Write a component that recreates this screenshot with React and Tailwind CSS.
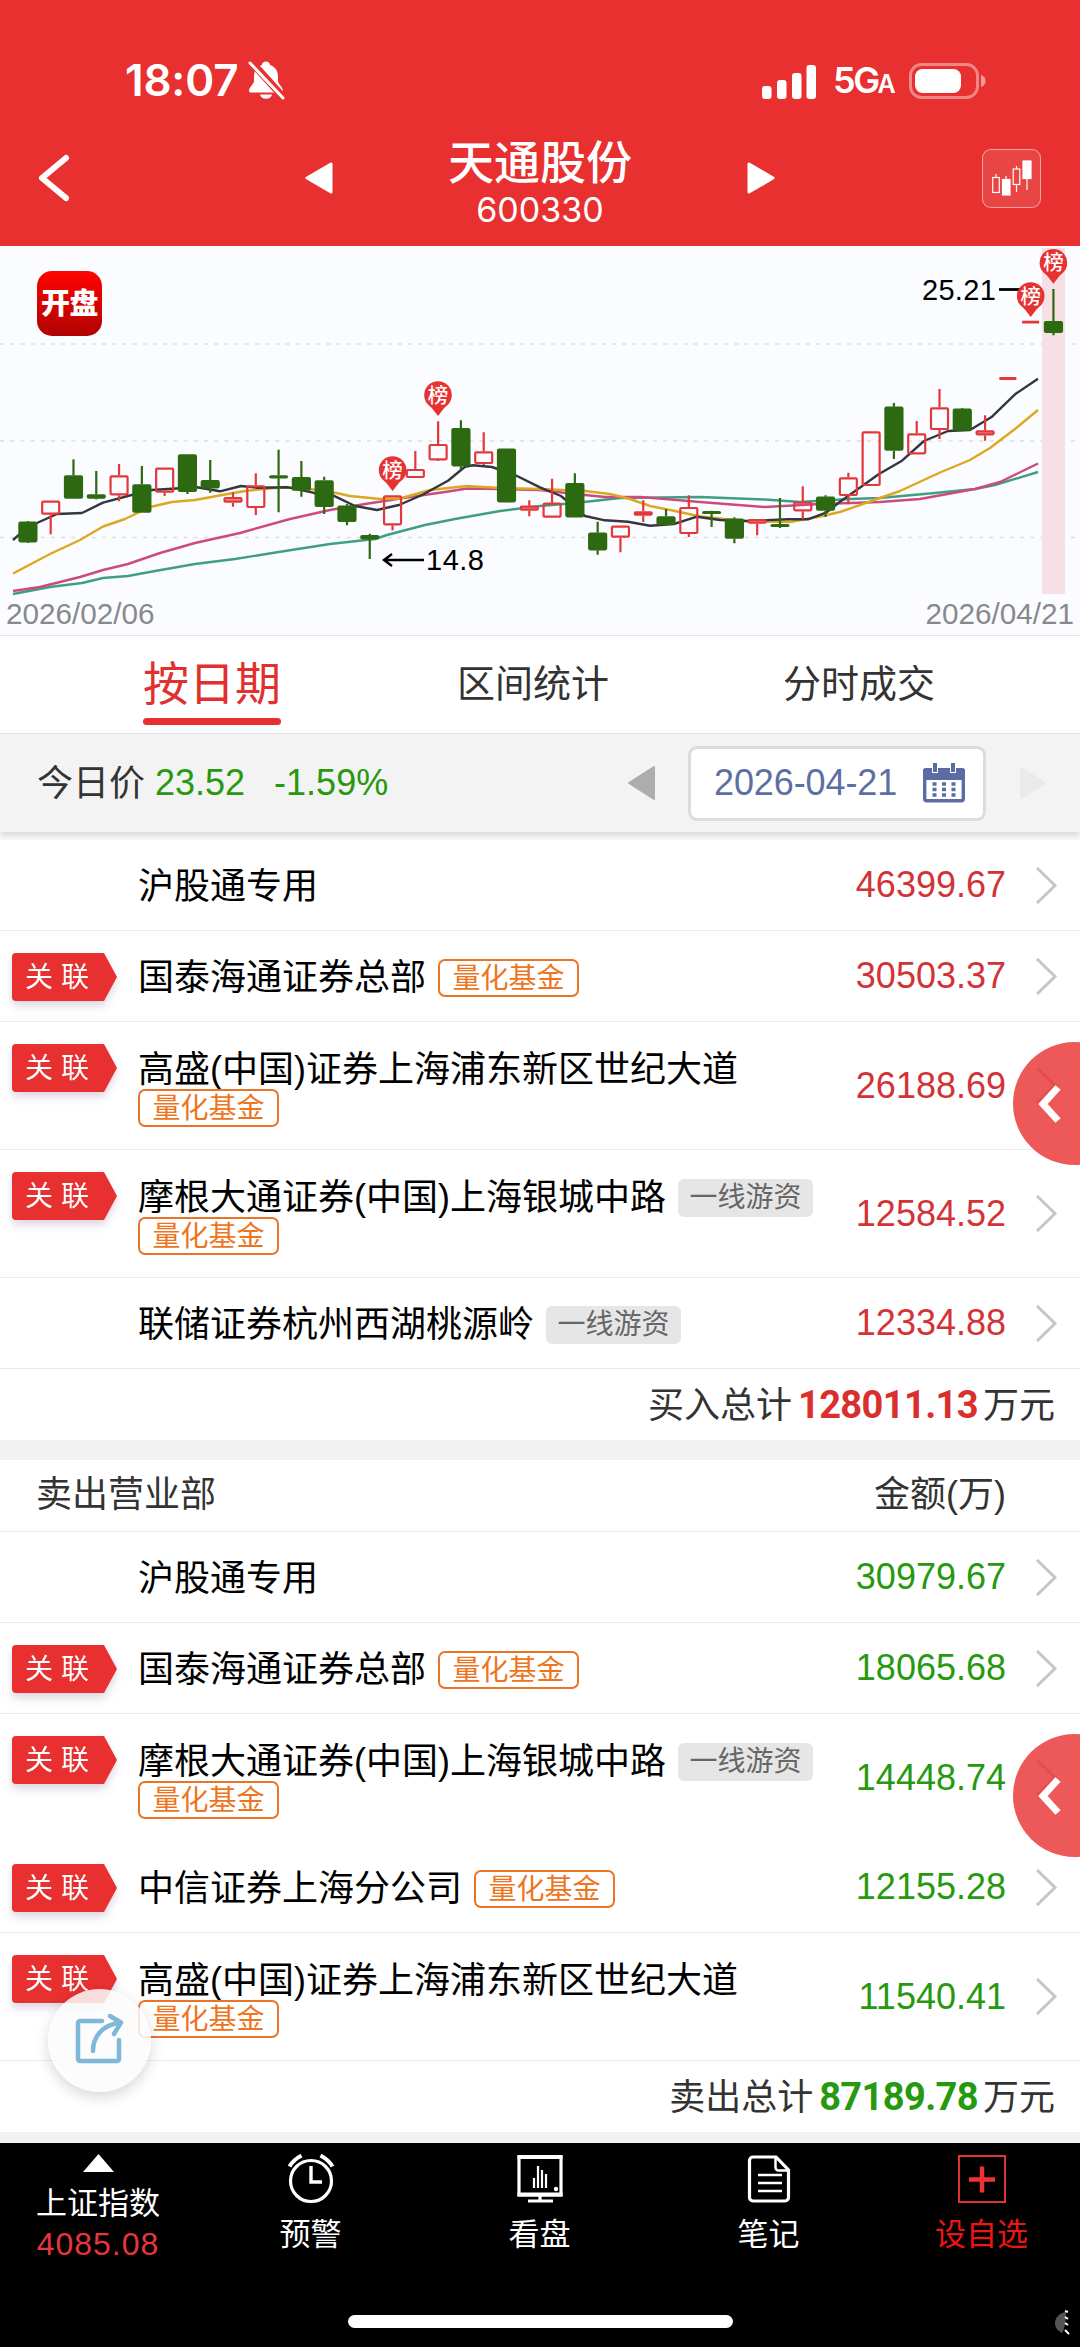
import React from 'react';
import clsx from 'clsx';

// [isUp, high, bodyTop, bodyBottom, low]
const CANDLES = [
  [0, 275, 275.7, 296.3, 297], [1, 254.7, 254.7, 268.7, 288.3], [0, 213.3, 229.3, 252.7, 252.7],
  [0, 225, 248.3, 252.7, 253.5], [1, 218, 229.3, 249.3, 255.3], [0, 220, 238.3, 266.7, 266.7],
  [1, 221.7, 221.7, 246.7, 250], [0, 208.3, 208.3, 246, 248], [0, 214, 234, 242.3, 246.7],
  [1, 246.3, 251, 256.7, 260.7], [1, 227.3, 239.3, 262, 269], [0, 203.7, 229.3, 232.3, 266.3],
  [0, 215, 231, 244.7, 250.7], [0, 230.7, 234.3, 261, 268], [0, 258, 259.7, 276, 279.3],
  [0, 287.7, 289, 293.3, 313], [1, 249.3, 249.3, 279.3, 284.3], [1, 205, 223, 232, 232],
  [1, 175.3, 198, 214.3, 215], [0, 174.3, 182, 220.3, 224], [1, 186.3, 205.3, 218, 219],
  [0, 202.7, 202.7, 256.3, 256.3], [1, 254.3, 259.7, 264.7, 270.3], [1, 232.7, 256.7, 271.7, 272],
  [0, 227.3, 237, 271.3, 271.3], [0, 275.7, 286.7, 304.3, 308.7], [1, 279.7, 279.7, 291.7, 306.3],
  [1, 254.3, 265.3, 269.7, 276], [0, 263, 270.3, 279, 279.5], [1, 249.3, 261, 288, 291],
  [0, 264.7, 265, 268, 281], [0, 271.3, 272.7, 292.7, 297.3], [1, 273, 273, 277.7, 289.3],
  [0, 252, 278, 280.7, 282], [1, 240.3, 255.7, 265.3, 273.3], [0, 249.3, 250.7, 264.7, 271],
  [1, 226.7, 231.3, 250, 258.3], [1, 185.3, 185.3, 240, 240], [0, 157, 160.7, 204.7, 213],
  [1, 175, 187.3, 208.3, 208.3], [1, 143, 161.3, 184, 193], [0, 162, 162.7, 184.7, 185],
  [1, 169.3, 184.3, 189.3, 194.7], [1, 131, 131, 134, 134], [1, 74.7, 74.7, 77.5, 77.5],
  [0, 43, 75, 87, 89.3],
];

const AVERAGES = [
  { color: '#3f9f84', points: '13,348 50,341 82,337 103,332 128,330 155,325 195,318 235,313 285,305 330,298 375,293 387,289 425,279 455,273 500,265 540,260 575,257 620,252 700,251 765,253.5 800,256 850,253 880,252 935,247 975,243 995,239 1038,226' },
  { color: '#cc4a80', points: '13,345 40,341 60,336 80,331 103,324 128,318 160,307 195,297 240,287 290,273 330,264 365,258 410,251 445,246 467,242.5 500,243 540,244 575,248 605,251 640,251 665,253 700,256 765,261 820,258 880,256 920,253 975,243 1000,236 1038,217.5' },
  { color: '#dba81f', points: '13,327.5 50,308 80,294 103,280.5 125,273 150,261 172,256 195,254 222,249 245,245 285,241 325,244.5 350,250 380,253 400,252.5 430,244 467,240 500,242 540,243 585,245 610,248 630,253 650,260 675,265 700,270.5 750,275.5 790,276 820,270.5 840,266 870,255.5 900,245 940,226.5 970,214 990,202 1015,183 1038,164' },
  { color: '#33363c', points: '13,294 28,281 57,268 82,267 103,256.7 141,246.5 152,244 176,242.5 197,241.3 220,245.3 241,240 257,241.7 288,241.3 313,246.7 333,249.3 355,260 377,264 399,259 422,249 448,234.7 465,220.7 473,219.3 492,221 515,229 540,241.3 561,250 585,270 605,274.3 628,275.7 650,279.7 674,278 697,270.7 720,274 747,275 788,273.3 808,273.3 826,266.7 840,255.7 859,242.3 879,228 902,214.7 924,195 948,185 970,184 992,170.7 1015,148.3 1038,132.7' },
];

const PINS = [[392.6, 224], [438, 149], [1030.7, 50], [1053.4, 16.7]];

const BUY = [
  { name: '沪股通专用', amount: '46399.67' },
  { name: '国泰海通证券总部', amount: '30503.37', linked: true, quant: true },
  { name: '高盛(中国)证券上海浦东新区世纪大道', amount: '26188.69', linked: true, quant: true, wrap: true, drawer: true },
  { name: '摩根大通证券(中国)上海银城中路', amount: '12584.52', linked: true, quant: true, hot: true, wrap: true },
  { name: '联储证券杭州西湖桃源岭', amount: '12334.88', hot: true },
];

const SELL = [
  { name: '沪股通专用', amount: '30979.67' },
  { name: '国泰海通证券总部', amount: '18065.68', linked: true, quant: true },
  { name: '摩根大通证券(中国)上海银城中路', amount: '14448.74', linked: true, quant: true, hot: true, wrap: true, drawer: true, noBorder: true },
  { name: '中信证券上海分公司', amount: '12155.28', linked: true, quant: true },
  { name: '高盛(中国)证券上海浦东新区世纪大道', amount: '11540.41', linked: true, quant: true, wrap: true },
];

function StatusBar() {
  return (
    <div className="flex h-[110px] items-start justify-between pl-[125px] pr-[94px] pt-[58px] font-['Inter','Noto_Sans_CJK_SC',sans-serif]">
      <div className="flex items-center">
        <span className="text-[44px] font-semibold leading-[44px] tracking-[-0.2px]">18:07</span>
        <svg className="ml-[9px]" width="38" height="40" viewBox="0 0 38 40">
          <path fill="#fff" d="M19 1.500c-2.200 0-3.900 1.500-4.100 3.400C9.800 6.500 7 11 7 16v5c0 3-5 6.500-5 9.800 0 1.200.8 1.800 2 1.800h30c1.200 0 2-.6 2-1.800 0-3.300-5-6.800-5-9.800v-5c0-5-2.800-9.500-7.900-11.100C22.900 3 21.200 1.500 19 1.500zM13 34.500c.5 2.700 3 4.300 6 4.300s5.500-1.600 6-4.300z" />
          <path d="M4 1.500L37 38" stroke="#e83030" strokeWidth="7.500" />
          <path d="M3 3L36 38" stroke="#fff" strokeWidth="3" strokeLinecap="round" />
        </svg>
      </div>
      <div className="flex items-center">
        <svg width="54" height="36" viewBox="0 0 54 36" fill="#fff">
          <rect x="0" y="22" width="9.500" height="13" rx="3" />
          <rect x="15" y="16" width="9.500" height="19" rx="3" />
          <rect x="30" y="9" width="9.500" height="26" rx="3" />
          <rect x="44.500" y="1" width="9.500" height="34" rx="3" />
        </svg>
        <span className="ml-[17px] flex w-[60px] items-baseline font-semibold leading-[44px]">
          <span className="text-[36px] tracking-[-2.5px]">5G</span>
          <span className="text-[25px]">A</span>
        </span>
        <svg className="ml-[16px]" width="77" height="38" viewBox="0 0 77 38">
          <rect x="1.500" y="1.500" width="67" height="33" rx="11" fill="none" stroke="#fff" strokeOpacity=".42" strokeWidth="3" />
          <rect x="6" y="6" width="46" height="24" rx="7.500" fill="#fff" />
          <path d="M72 12c3 .8 4.500 3 4.500 6s-1.500 5.200-4.500 6z" fill="#fff" fillOpacity=".5" />
        </svg>
      </div>
    </div>
  );
}

function TitleBar() {
  return (
    <div className="flex h-[136px] items-center pl-[36px] pr-[39px]">
      <svg width="36" height="50" viewBox="0 0 36 50" fill="none" stroke="#fff" strokeWidth="6" strokeLinecap="round" strokeLinejoin="round">
        <path d="M30 5L6 25l24 20" />
      </svg>
      <svg className="ml-[233px]" width="28" height="32" viewBox="0 0 28 32" fill="#fff" stroke="#fff" strokeWidth="3" strokeLinejoin="round">
        <path d="M2 16L26 2v28z" />
      </svg>
      <div className="flex flex-1 flex-col items-center pt-[13px]">
        <div className="text-[46px] font-medium leading-[50px]">天通股份</div>
        <div className="font-['Inter',sans-serif] text-[34px] leading-[43px]">600330</div>
      </div>
      <svg className="mr-[207px]" width="28" height="32" viewBox="0 0 28 32" fill="#fff" stroke="#fff" strokeWidth="3" strokeLinejoin="round">
        <path d="M26 16L2 2v28z" />
      </svg>
      <div className="flex h-[59px] w-[59px] items-center justify-center rounded-[9px] border border-white/50 bg-white/10">
        <svg width="41" height="36" viewBox="0 0 41 36" fill="none" stroke="#fff" strokeWidth="1.200">
          <path d="M5 14v3M15 16v3M25.500 6v3M25.500 24v8M36 18v12" />
          <rect x="1.700" y="17.500" width="6.600" height="15" />
          <rect x="11.500" y="19.500" width="7.500" height="15.500" fill="#fff" />
          <rect x="22.200" y="9" width="6.600" height="15.500" />
          <rect x="32" y="1" width="8" height="17.500" fill="#fff" />
        </svg>
      </div>
    </div>
  );
}

function KLineChart() {
  return (
    <section className="relative h-[390px] border-b border-[#e3e6ea] bg-[#fbfcff]">
      <svg width="1080" height="389" viewBox="0 0 1080 389" className="block font-['Liberation_Sans','Noto_Sans_CJK_SC',sans-serif]">
        {[98, 195, 291.5].map((y) => (
          <path key={y} d={`M0 ${y}H1080`} stroke="#dddee2" strokeWidth="1.500" strokeDasharray="4 6.200" />
        ))}
        <rect x="1042" y="2" width="23" height="346" fill="#f6dfe5" />
        {AVERAGES.map((l) => (
          <polyline key={l.color} points={l.points} fill="none" stroke={l.color} strokeWidth="2.400" strokeLinejoin="round" />
        ))}
        {CANDLES.map(([up, high, top, bottom, low], i) => {
          const x = 27.9 + i * 22.79;
          const color = up ? '#e2383b' : '#2c6910';
          // limit-up days have no range, draw them as a flat bar
          if (up && high === top && low === bottom && bottom - top < 4) {
            return <rect key={i} x={x - 8.5} y={top} width="17" height={bottom - top} fill={color} />;
          }
          return (
            <g key={i} stroke={color} strokeWidth="2.200">
              <path d={`M${x} ${high}V${top}M${x} ${bottom}V${low}`} />
              {up ? (
                <rect x={x - 8.5} y={top + 1} width="17" height={bottom - top - 2} rx="1" fill={bottom - top < 7 ? '#ee8a8c' : 'none'} />
              ) : (
                <rect x={x - 8.5} y={top + 1} width="17" height={Math.max(bottom - top - 2, 1)} rx="1" fill={color} />
              )}
            </g>
          );
        })}
        <path d="M999 43.500h22" stroke="#000" strokeWidth="2.800" />
        {PINS.map(([x, y]) => (
          <g key={x}>
            <path d={`M${x - 12.5} ${y + 6}Q${x - 5} ${y + 14} ${x} ${y + 21}Q${x + 5} ${y + 14} ${x + 12.5} ${y + 6}z`} fill="#e63232" />
            <circle cx={x} cy={y} r="13.800" fill="#e63232" />
            <text x={x} y={y + 7.5} fontSize="20.500" fontWeight="500" fill="#fff" textAnchor="middle">榜</text>
          </g>
        ))}
        <path d="M424 314H385M392 308l-8 6 8 6" fill="none" stroke="#000" strokeWidth="2.400" />
        <text x="426" y="324" fontSize="29" letterSpacing=".5">14.8</text>
        <text x="922" y="53.500" fontSize="29" letterSpacing=".3">25.21</text>
        <text x="6" y="377.500" fontSize="29.700" fill="#88898c">2026/02/06</text>
        <text x="1074" y="377.500" fontSize="29.700" fill="#88898c" textAnchor="end">2026/04/21</text>
      </svg>
      <div className="absolute left-[37px] top-[25px] flex h-[65px] w-[65px] items-center justify-center rounded-[15px] bg-gradient-to-b from-[#ff0400] to-[#b00303] pt-[2px] text-[29px] font-black tracking-[-0.5px] text-white">
        开盘
      </div>
    </section>
  );
}

function Tabs() {
  return (
    <nav className="flex h-[98px] border-b border-[#e4e6e6] text-[38px] text-[#333]">
      <div className="ml-[143px] flex w-[138px] flex-col items-center">
        <span className="whitespace-nowrap pt-[18px] text-[46px] leading-[60px] text-[#e0302f]">按日期</span>
        <span className="mt-[4px] h-[7px] w-full rounded-full bg-[#e83030]" />
      </div>
      <span className="ml-[176px] w-[152px] pt-[19px] leading-[58px]">区间统计</span>
      <span className="ml-[174px] w-[152px] pt-[19px] leading-[58px]">分时成交</span>
    </nav>
  );
}

function CalendarIcon() {
  return (
    <svg width="42" height="40" viewBox="0 0 42 40">
      <rect x="1.700" y="6.700" width="38.600" height="31" rx="2" fill="#fff" stroke="#5a6ca4" strokeWidth="3.400" />
      <path d="M0 8a3 3 0 013-3h36a3 3 0 013 3v9H0z" fill="#5a6ca4" />
      <path d="M12 1v9M30 1v9" stroke="#fff" strokeWidth="6" />
      <path d="M12 0v9M30 0v9" stroke="#5a6ca4" strokeWidth="4" />
      {[20, 25.5, 31].map((y) => (
        <path key={y} d={`M9.500 ${y + 1}h4M19 ${y + 1}h4M28.500 ${y + 1}h4`} stroke="#5a6ca4" strokeWidth="3.600" />
      ))}
    </svg>
  );
}

function DateBar() {
  return (
    <div className="relative z-10 flex h-[98px] items-center bg-[#f3f3f3] pl-[37px] pr-[33px] text-[36px] shadow-[0_3px_6px_rgba(0,0,0,0.14)]">
      <span className="pt-px text-[#333]">今日价</span>
      <span className="ml-[10px] text-[#26990f]">23.52</span>
      <span className="ml-[29px] text-[#26990f]">-1.59%</span>
      <svg className="ml-auto" width="28" height="34" viewBox="0 0 28 34" fill="#adadad" stroke="#adadad" strokeWidth="2" strokeLinejoin="round">
        <path d="M1 17L26 1v32z" />
      </svg>
      <div className="ml-[32px] flex h-[75px] w-[298px] items-center justify-between rounded-[9px] border-[3px] border-[#dcdcdc] bg-white pl-[23px] pr-[18px] text-[#5c6fa3]">
        <span className="tracking-[-0.1px]">2026-04-21</span>
        <CalendarIcon />
      </div>
      <svg className="ml-[34px]" width="27" height="34" viewBox="0 0 27 34" fill="#eaeaea">
        <path d="M0 0l27 17L0 34z" />
      </svg>
    </div>
  );
}

const QuantTag = () => (
  <span className="flex h-[38px] items-center rounded-[7px] border-[2.5px] border-[#ea7426] px-[12.5px] pt-[2px] text-[28px] leading-none text-[#ee7420]">
    量化基金
  </span>
);

const HotTag = () => (
  <span className="flex h-[38px] items-center rounded-[6px] bg-[#e6e6e6] px-[11.5px] text-[28px] leading-none text-[#666]">
    一线游资
  </span>
);

function LinkedBadge() {
  return (
    <div className="relative h-[48px] w-[105px] drop-shadow-[0_5px_4px_rgba(120,90,140,0.25)]">
      <svg className="block" width="105" height="48" viewBox="0 0 105 48">
        <path d="M4 0h88l13 24-13 24H4a4 4 0 01-4-4V4a4 4 0 014-4z" fill="#e83030" />
      </svg>
      <span className="absolute left-[13px] top-px whitespace-nowrap text-[28px] leading-[48px] tracking-[8px] text-white">关联</span>
    </div>
  );
}

function SeatRow({ seat, amountColor }) {
  return (
    <li
      className={clsx(
        'relative flex border-b',
        seat.wrap ? 'h-[128px]' : 'h-[91px]',
        seat.noBorder ? 'border-transparent' : 'border-[#ebebeb]',
      )}
    >
      <div className="w-[138px] pl-[12px] pt-[22px]">{seat.linked && <LinkedBadge />}</div>
      <div className={clsx('flex flex-1 flex-col items-start', seat.wrap ? 'pt-[29px]' : 'pt-[28px]')}>
        <div className="flex h-[38px] items-center gap-[12px]">
          <span className="whitespace-nowrap text-[36px] leading-[38px] text-black">{seat.name}</span>
          {seat.hot && <HotTag />}
          {seat.quant && !seat.wrap && <QuantTag />}
        </div>
        {seat.quant && seat.wrap && <QuantTag />}
      </div>
      <div className="flex items-center pr-[22px]">
        <span className={clsx('text-[36px]', amountColor)}>{seat.amount}</span>
        <svg className="ml-[29px]" width="23" height="37" viewBox="0 0 23 37" fill="none" stroke="#c6c6c6" strokeWidth="3">
          <path d="M2 1l18 17.500L2 36" />
        </svg>
      </div>
      {seat.drawer && (
        <div className="absolute right-0 top-[20px] z-10 h-[123px] w-[67px] overflow-hidden">
          <div className="flex h-[123px] w-[123px] items-center rounded-full bg-[#e83030]/80 pl-[22px]">
            <svg width="28" height="40" viewBox="0 0 28 40" fill="none" stroke="#fff" strokeWidth="7">
              <path d="M23 3.500L8 20l15 16.500" />
            </svg>
          </div>
        </div>
      )}
    </li>
  );
}

function TotalRow({ label, value, color }) {
  return (
    <div className="flex h-[71px] items-center justify-end pr-[25px] pt-[2px] text-[36px] text-[#333]">
      {label}
      <span className={clsx("ml-[6px] mr-[5px] font-['Roboto',sans-serif] text-[38px] font-bold tracking-[-0.6px]", color)}>{value}</span>
      万元
    </div>
  );
}

function TabItem({ label, width, color, children }) {
  return (
    <div className={clsx('flex flex-col items-center pt-[10px]', width, color)}>
      <svg width="52" height="52" viewBox="0 0 52 52" fill="none" stroke="currentColor" strokeWidth="3.200">
        {children}
      </svg>
      <span className="mt-[8px] text-[31px] leading-[44px]">{label}</span>
    </div>
  );
}

function BottomBar() {
  return (
    <footer className="relative h-[204px] bg-black text-white">
      <div className="flex">
        <div className="flex w-[196px] flex-col items-center pt-[11px]">
          <svg width="31" height="18" viewBox="0 0 31 18" fill="#fff">
            <path d="M15.500 0L31 18H0z" />
          </svg>
          <span className="mt-[12px] text-[31px] leading-[40px]">上证指数</span>
          <span className="text-[32px] leading-[40px] tracking-[1px] text-[#e5363d]">4085.08</span>
        </div>
        <TabItem label="预警" width="w-[229px]">
          <circle cx="26" cy="28" r="20.500" />
          <path d="M26 13v16h11" strokeWidth="3.400" />
          <path d="M4.500 13.500c2.500-4.500 6.500-8 12-11M47.500 13.500c-2.500-4.500-6.500-8-12-11" strokeWidth="4" />
        </TabItem>
        <TabItem label="看盘" width="w-[229px]">
          <path d="M5 4h42v38H5z" />
          <path d="M3.500 41.500h45M3.500 4h45" strokeWidth="4" />
          <path d="M26 42v6M14 48h25" />
          <path d="M20 25v10M24 13v22M28 17v18M32 21v14" strokeWidth="2.200" />
          <circle cx="42" cy="36" r="2.200" fill="currentColor" stroke="none" />
        </TabItem>
        <TabItem label="笔记" width="w-[229px]">
          <path d="M33 4H10a3.500 3.500 0 00-3.500 3.500v37A3.500 3.500 0 0010 48h32a3.500 3.500 0 003.500-3.500V17z" />
          <path d="M32.500 4v10.500a3 3 0 003 3H45" strokeWidth="2.500" />
          <path d="M15 22h24M15 30h24M15 38h24" strokeWidth="2.500" />
        </TabItem>
        <TabItem label="设自选" width="w-[197px]" color="text-[#f01414]">
          <rect x="3" y="3" width="46" height="46" stroke="#dd3434" strokeWidth="2" />
          <path d="M26 13.500v26M13 26.500h26" stroke="#f03036" strokeWidth="4.500" />
        </TabItem>
      </div>
      <div className="absolute bottom-[19px] left-[348px] h-[13px] w-[385px] rounded-full bg-white" />
      <svg className="absolute bottom-[12px] right-[10px]" width="16" height="25" viewBox="0 0 16 25">
        <path d="M12 2C5 3 1 8 1 13s3 8 7 10c3-4 4-15 4-21z" fill="#555" />
        <path d="M11 1l3 1M11 7l3 2M11 13l3 2M11 20l4 4" stroke="#fff" strokeWidth="2" />
      </svg>
    </footer>
  );
}

export default function App() {
  return (
    <div className="relative h-[2347px] w-[1080px] overflow-hidden bg-white font-['Liberation_Sans','Noto_Sans_CJK_SC',sans-serif]">
      <header className="h-[246px] bg-[#e83030] text-white">
        <StatusBar />
        <TitleBar />
      </header>
      <KLineChart />
      <Tabs />
      <DateBar />
      <div className="h-[8px] bg-[#f8f8f8]" />
      <ul>
        {BUY.map((s) => <SeatRow key={s.name} seat={s} amountColor="text-[#d23336]" />)}
      </ul>
      <TotalRow label="买入总计" value="128011.13" color="text-[#d9302f]" />
      <div className="h-[20px] bg-[#f2f2f2]" />
      <div className="flex h-[72px] items-center justify-between border-b border-[#ebebeb] pb-[2px] pl-[36px] pr-[74px] text-[36px] text-[#333]">
        <span>卖出营业部</span>
        <span>金额(万)</span>
      </div>
      <ul>
        {SELL.map((s) => <SeatRow key={s.name} seat={s} amountColor="text-[#26990f]" />)}
      </ul>
      <TotalRow label="卖出总计" value="87189.78" color="text-[#26990f]" />
      <div className="h-[11px] bg-[#f2f2f2]" />
      <BottomBar />

      {/* floating share button */}
      <button className="absolute bottom-[255px] left-[48px] z-20 flex h-[103px] w-[103px] items-center justify-center rounded-full bg-[#fcfcfc]/85 shadow-[0_5px_14px_rgba(0,0,0,0.16)]">
        <svg width="50" height="54" viewBox="0 0 50 54" fill="none" stroke="#7db8d8" strokeWidth="4.500" strokeLinecap="round" strokeLinejoin="round">
          <path d="M27 7H5a2 2 0 00-2 2v36a2 2 0 002 2h37a2 2 0 002-2V26" />
          <path d="M18 37c0-14 9-26 27-28.500M35 2l11 6.500L39 20" />
        </svg>
      </button>
    </div>
  );
}
